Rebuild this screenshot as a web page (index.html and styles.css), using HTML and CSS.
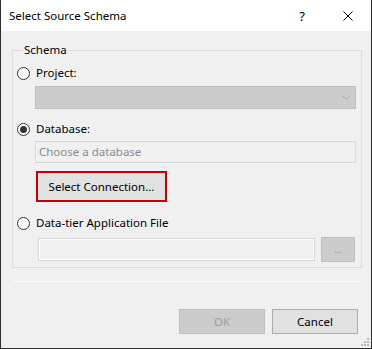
FILE: index.html
```html
<!DOCTYPE html>
<html lang="en">
<head>
  <meta charset="UTF-8">
  <title>Select Source Schema</title>
  <link rel="stylesheet" href="styles.css">
</head>
<body>
  <div class="window">
    <header class="titlebar">
      <span class="title">Select Source Schema</span>
      <span class="title-btn help">?</span>
      <span class="title-btn close">
        <svg width="10" height="10" viewBox="0 0 10 10">
          <path d="M0.5 0.5 L9.5 9.5 M9.5 0.5 L0.5 9.5" stroke="#000" stroke-width="1" fill="none"/>
        </svg>
      </span>
    </header>

    <div class="content">
      <fieldset class="group">
        <legend>Schema</legend>

        <label class="option">
          <span class="radio"></span>
          <span>Project:</span>
        </label>
        <div class="combo">
          <svg class="chevron" width="9" height="5" viewBox="0 0 9 5">
            <path d="M0.5 0.5 L4.5 4.5 L8.5 0.5" stroke="#a8a8a8" stroke-width="1" fill="none"/>
          </svg>
        </div>

        <label class="option option-db">
          <span class="radio checked"></span>
          <span>Database:</span>
        </label>
        <div class="textbox">Choose a database</div>
        <button class="btn btn-focus">Select Connection...</button>

        <label class="option option-file">
          <span class="radio"></span>
          <span>Data-tier Application File</span>
        </label>
        <div class="file-row">
          <div class="file-box"></div>
          <button class="btn btn-browse" disabled>...</button>
        </div>
      </fieldset>

      <div class="separator"></div>

      <div class="actions">
        <button class="btn btn-dialog" disabled>OK</button>
        <button class="btn btn-dialog btn-cancel">Cancel</button>
      </div>
    </div>

    <svg class="grip" width="8" height="8" viewBox="0 0 8 8">
      <rect x="6" y="0" width="2" height="2" fill="#b8b8b8"/>
      <rect x="3" y="3" width="2" height="2" fill="#b8b8b8"/>
      <rect x="6" y="3" width="2" height="2" fill="#b8b8b8"/>
      <rect x="0" y="6" width="2" height="2" fill="#b8b8b8"/>
      <rect x="3" y="6" width="2" height="2" fill="#b8b8b8"/>
      <rect x="6" y="6" width="2" height="2" fill="#b8b8b8"/>
    </svg>
  </div>
</body>
</html>
```

FILE: styles.css
```css
:root {
  --window-bg: #f0f0f0;
  --frame: #2e2e2e;
  --group-border: #dcdcdc;
  --disabled-bg: #cccccc;
  --disabled-border: #bfbfbf;
  --button-bg: #e1e1e1;
  --button-border: #adadad;
  --focus-red: #c00000;
}

* {
  margin: 0;
  padding: 0;
  box-sizing: border-box;
  font-family: 'Segoe UI', 'Noto Sans', sans-serif;
  font-size: 11.5px;
}

body {
  background: var(--window-bg);
  color: #000;
}

.window {
  position: relative;
  width: 372px;
  height: 349px;
  border: 1px solid var(--frame);
  border-top: none;
  background: var(--window-bg);
  display: flex;
  flex-direction: column;
}

.titlebar {
  height: 31px;
  background: #fff;
  display: flex;
  align-items: center;
  padding-left: 8px;
}

.title {
  flex: 1;
  line-height: 16px;
}

.title-btn {
  width: 46px;
  height: 31px;
  display: flex;
  align-items: center;
  justify-content: center;
}

.help {
  font-size: 13px;
}

.content {
  flex: 1;
  display: flex;
  flex-direction: column;
}

.group {
  margin: 11px 9px 0 11px;
  border: 1px solid var(--group-border);
  padding: 0 5px 5px 4px;
  display: flex;
  flex-direction: column;
  align-items: flex-start;
}

.group legend {
  margin-left: 5px;
  padding: 0 2px;
  line-height: 16px;
}

.option {
  display: flex;
  align-items: center;
  gap: 6px;
  height: 16px;
  line-height: 16px;
  margin-top: 7px;
}

.option-db {
  margin-top: 12px;
}

.option-file {
  margin-top: 13px;
}

.radio {
  width: 13px;
  height: 13px;
  border: 1px solid #333;
  border-radius: 50%;
  background: #fff;
  display: flex;
  align-items: center;
  justify-content: center;
}

.radio.checked::after {
  content: "";
  width: 7px;
  height: 7px;
  border-radius: 50%;
  background: #333;
}

.combo {
  margin: 5px 0 0 18px;
  width: 321px;
  height: 23px;
  background: var(--disabled-bg);
  border: 1px solid var(--disabled-border);
  display: flex;
  align-items: center;
  justify-content: flex-end;
  padding-right: 4px;
}

.textbox {
  margin: 4px 0 0 18px;
  width: 321px;
  height: 22px;
  border: 1px solid #d9d9d9;
  color: #8a8a8a;
  line-height: 20px;
  padding-left: 3px;
}

.btn {
  background: var(--button-bg);
  border: 1px solid var(--button-border);
  color: #000;
  cursor: default;
}

.btn-focus {
  margin: 8px 0 0 19px;
  width: 131px;
  height: 31px;
  border: 2px solid var(--focus-red);
}

.file-row {
  margin: 6px 0 0 21px;
  display: flex;
  align-items: center;
  gap: 6px;
}

.file-box {
  width: 277px;
  height: 23px;
  border: 1px solid #d6d6d6;
  box-shadow: inset 0 0 0 1px #fff;
}

.btn-browse {
  width: 34px;
  height: 25px;
  background: var(--disabled-bg);
  border-color: var(--disabled-border);
  color: #8c8c8c;
  font-size: 9px;
}

.separator {
  margin: 13px 0 0 13px;
  width: 345px;
  height: 1px;
  background: #fcfcfc;
}

.actions {
  margin: 27px 13px 0 0;
  display: flex;
  justify-content: flex-end;
  gap: 7px;
}

.btn-dialog {
  width: 86px;
  height: 25px;
}

.btn-dialog:disabled {
  background: var(--disabled-bg);
  border-color: var(--disabled-border);
  color: #a0a0a0;
}

.grip {
  position: absolute;
  right: 2px;
  bottom: 2px;
}
```
